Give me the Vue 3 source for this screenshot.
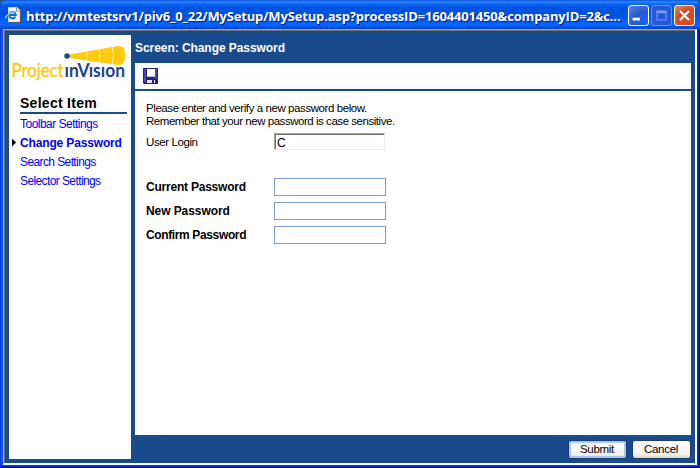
<script setup>
const items = [
  { label: 'Toolbar Settings', cls: 'i1' },
  { label: 'Change Password', cls: 'i2', active: true },
  { label: 'Search Settings', cls: 'i3' },
  { label: 'Selector Settings', cls: 'i4' },
]
const fields = [
  { label: 'Current Password', cls: 'f1' },
  { label: 'New Password', cls: 'f2' },
  { label: 'Confirm Password', cls: 'f3' },
]
</script>

<template>
  <div class="window">
    <header class="titlebar">
      <svg class="ie" width="18" height="18" viewBox="0 0 18 18">
        <path d="M3.5 1.5H12L15 4.5V16H3.5Z" fill="#f6f4e8" stroke="#dcd9c6" />
        <path d="M11.5 1.5V5H15" fill="#fff" stroke="#8e8c7c" />
        <path d="M15.5 5V16.5H4" fill="none" stroke="#555a68" />
        <path d="M10.4 10.8A3.3 3.3 0 1 1 10.8 9H5" fill="none" stroke="#1267d4" stroke-width="1.9" />
        <path d="M1 12.5C0 10 6 5 12 5.5" fill="none" stroke="#8ccbf8" stroke-width="1.4" />
      </svg>
      <span class="url">http://vmtestsrv1/piv6_0_22/MySetup/MySetup.asp?processID=1604401450&amp;companyID=2&amp;c...</span>
      <div class="controls">
        <svg class="ctl min" viewBox="0 0 21 21"><path d="M4 13h8v3H4z" fill="#fff" /></svg>
        <svg class="ctl max" viewBox="0 0 21 21"><path d="M5.5 6h10v9.5h-10zM5 6.5h11" fill="none" stroke="#7f9cf0" /><path d="M5 5h11v3H5z" fill="#7f9cf0" /></svg>
        <svg class="ctl close" viewBox="0 0 21 21"><path d="M5.5 5.5l10 10M15.5 5.5l-10 10" stroke="#fff" stroke-width="2.3" /></svg>
      </div>
    </header>
    <div class="client">
      <aside class="side">
        <svg class="logo" width="122" height="52" viewBox="0 0 122 52">
          <path d="M60 19.5L108 11.2Q116 9.5 116 20Q116 31 109 30L60 23Z" fill="#ffc90e" />
          <path d="M78 15v12M90 13q2 8 0 16M103 11q3 9 0 19" stroke="#fff3b8" fill="none" />
          <circle cx="58" cy="21" r="2.7" fill="#21438f" />
          <text class="lg" x="2.5" y="41.5" fill="#ffc90e" stroke="#ffc90e" stroke-width=".4" font-size="18.5" textLength="52" lengthAdjust="spacingAndGlyphs">Project</text>
          <text class="lg vis" x="55.5" y="41.5" fill="#21438f" font-size="18.5" textLength="60.5" lengthAdjust="spacingAndGlyphs">ınVısıon</text>
        </svg>
        <h2 class="heading">Select Item</h2>
        <nav>
          <a v-for="i in items" :key="i.label" class="item" :class="[i.cls, { active: i.active }]">
            <svg width="11" height="9" viewBox="0 0 11 9"><path v-if="i.active" d="M3 0.5L7 4.5L3 8.5Z" fill="#000" /></svg>
            <span>{{ i.label }}</span>
          </a>
        </nav>
      </aside>
      <main class="main">
        <div class="screen">Screen: Change Password</div>
        <div class="toolbar">
          <svg width="15" height="16" viewBox="0 0 15 16">
            <path d="M0 0h15v16H1L0 15z" fill="#25257c" />
            <path d="M1 1h2v13H1zM12 1h2v10h-2z" fill="#4848a4" />
            <path d="M4 1h8v8H4z" fill="#fff" />
            <path d="M4 8h8v1H4z" fill="#c4c4e4" />
            <path d="M4 12h8v3H4z" fill="#e6e6f2" />
            <path d="M9 12h2v3H9z" fill="#25257c" />
          </svg>
        </div>
        <section class="content">
          <p><span class="p1">Please enter and verify a new password below.</span><br><span class="p2">Remember that your new password is case sensitive.</span></p>
          <div class="row login"><span class="label">User Login</span><div class="readonly">C</div></div>
          <div v-for="f in fields" :key="f.label" class="row">
            <span class="label bold" :class="f.cls">{{ f.label }}</span><input class="field" type="password">
          </div>
        </section>
        <footer class="footer">
          <button class="btn default">Submit</button>
          <button class="btn">Cancel</button>
        </footer>
      </main>
    </div>
  </div>
</template>

<style>
body { margin: 0; overflow: hidden; background: #1a5b9b; }
</style>
<style scoped>
* { box-sizing: border-box; }
.window {
  width: 700px; height: 468px; display: flex; flex-direction: column;
  padding: 0 3px 3px; border-radius: 7px 7px 0 0;
  background: linear-gradient(90deg, #0831d9 0, #0a5bf0 2px, #0a5bf0 3px, #0831d9 3px, #0831d9 697px, #0646e8 697px, #0127b4 698px, #00138c 700px);
  font-family: "Liberation Sans", Arial, sans-serif; font-size: 12px; color: #000;
  position: relative;
}
.window::after {
  content: ""; position: absolute; left: 0; right: 0; bottom: 0; height: 3px;
  background: linear-gradient(#0646e8 0 1px, #0127b4 1px 2px, #00138c 2px);
}
.titlebar {
  height: 29px; flex: none; margin: 0 -3px; padding: 5px 4px 0 5px; display: flex;
  border-radius: 7px 7px 0 0; color: #fff;
  background: linear-gradient(#0b50d8 0, #2a86ff 2px, #0a66f2 4px, #0054e3 7px, #0052e1 15px, #0262fa 22px, #0367ff 25px, #0353e0 27px, #003dce 29px);
}
.ie { margin-top: 1px; flex: none; }
.url {
  font: bold 13px/22px "Open Sans", sans-serif; margin-left: 3px; width: 602px; white-space: nowrap;
  text-shadow: 1px 1px 1px #0a1883; letter-spacing: -0.165px;
}
.controls { display: flex; gap: 2px; }
.ctl { width: 21px; height: 21px; border: 1px solid #fff; border-radius: 3px; }
.min { background: radial-gradient(circle at 80% 85%, #1264ee, #2759d2 50%, #5c86e6); }
.max { background: #2558da; border-color: #6d95ef; }
.close { background: radial-gradient(circle at 75% 80%, #e04a18, #d94a25 55%, #ee8a70); }
.client {
  flex: 1; min-height: 0; display: flex; gap: 4px; background: #194a8b;
  border: 1px solid #aca899; border-right: 2px solid #fff; border-bottom: 2px solid #fff;
  box-shadow: inset 1px 1px #716f64; padding: 5px 4px 4px 5px;
}
.side { width: 122px; background: #fff; }
.logo { display: block; }
.lg { font-family: Lato, sans-serif; }
.vis { font-weight: bold; }
.heading { margin: 6px 4px 0 11px; height: 21px; border-bottom: 2px solid #194a8b; font: bold 14px/20px "Liberation Sans", sans-serif; letter-spacing: 0.28px; white-space: nowrap; }
.item { display: flex; align-items: center; height: 19px; color: #00f; white-space: nowrap; }
.item svg { flex: none; }
.item.active { font-weight: bold; letter-spacing: -0.15px; }
.i1 { letter-spacing: -0.52px; }
.i3, .i4 { letter-spacing: -0.6px; }
.main { flex: 1; display: flex; flex-direction: column; min-width: 0; }
.screen { height: 28px; line-height: 26px; color: #fff; font-weight: bold; letter-spacing: -0.06px; }
.toolbar { height: 26px; background: #fff; padding: 5px 8px; margin-bottom: 2px; }
.toolbar svg { display: block; }
.content { height: 344px; background: #fff; padding: 11px 11px 0; }
.content p { margin: 0; line-height: 13px; white-space: nowrap; font-size: 11.5px; letter-spacing: -0.42px; }
.p2 { letter-spacing: -0.46px; }
.row { display: flex; align-items: center; height: 24px; }
.login { margin: 3px 0 21px; height: 23px; align-items: flex-start; padding-top: 2px; }
.login .label { line-height: 18px; font-size: 11.5px; letter-spacing: -0.4px; }
.label { width: 128px; white-space: nowrap; }
.bold { font-weight: bold; }
.f1 { letter-spacing: -0.22px; }
.f2 { letter-spacing: -0.08px; }
.f3 { letter-spacing: -0.37px; }
.readonly { width: 111px; height: 17px; border: 1px solid; border-color: #aca899 #f1e9e2 #f1e9e2 #aca899; box-shadow: inset 1px 1px #716f64; padding-left: 2px; line-height: 18px; }
.field { width: 112px; height: 18px; padding: 0 3px; border: 1px solid #7b9ec4; background: #fff; border-radius: 0; outline: 0; }
.footer { display: flex; justify-content: flex-end; gap: 5px; padding: 5px 0 0; }
.btn {
  width: 59px; height: 19px; padding: 0 1px 0 0; border: 1px solid #17406f; border-radius: 3px; color: #000;
  background: linear-gradient(#fff, #f3f2ec 80%, #d8d2c4); font: 11.5px/15px "Liberation Sans", sans-serif; letter-spacing: -0.3px;
}
.default { box-shadow: inset 0 0 0 2px #a9c5f5; }
</style>
